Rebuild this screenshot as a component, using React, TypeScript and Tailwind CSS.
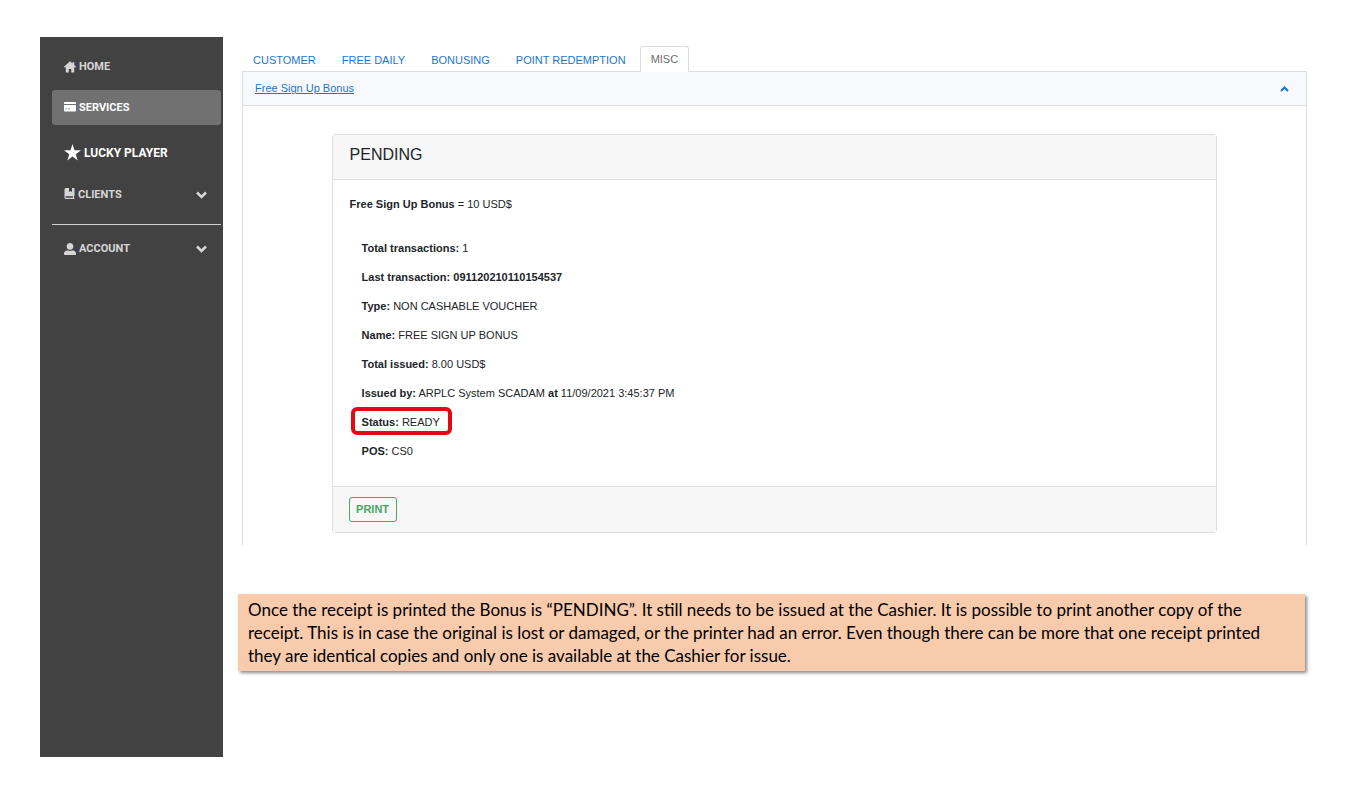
import React from "react";
import { FaUserAlt } from "react-icons/fa";

const HomeIcon = () => (
  <svg viewBox="0 0 22 22" className="w-3 h-3" fill="currentColor" aria-hidden="true">
    <path d="M11 0.5 L0 10.5 L1.8 12.3 L3.3 11 V21 H8.7 V14.5 H13.3 V21 H18.7 V11 L20.2 12.3 L22 10.5 L18.7 7.5 V2.5 H15.5 V4.6 Z" />
  </svg>
);

const CardIcon = () => (
  <svg viewBox="0 0 24 20" className="mb-[2px] w-3 h-[10px]" fill="currentColor" aria-hidden="true">
    <path d="M1.5 0 H22.5 Q24 0 24 1.5 V4 H0 V1.5 Q0 0 1.5 0 Z" />
    <path fillRule="evenodd" d="M0 6 H24 V17.5 Q24 19 22.5 19 H1.5 Q0 19 0 17.5 Z M3 13 V14.5 H6 V13 Z M8 13 V14.5 H12 V13 Z" />
  </svg>
);

const BookIcon = () => (
  <svg viewBox="0 0 20 22" className="mb-[2px] w-[11px] h-[11px]" fill="currentColor" aria-hidden="true">
    <path
      fillRule="evenodd"
      d="M3 0 H9 V8 L12 6 L15 8 V0 H18 Q20 0 20 2 V15 Q20 16 19 16 V20 H20 V22 H3 Q0 22 0 19 V3 Q0 0 3 0 Z M3.5 16.5 Q2 16.5 2 18 Q2 19.7 3.5 19.7 H17 V16.5 Z"
    />
  </svg>
);

const StarIcon = () => (
  <svg viewBox="0 0 34 34" className="w-[17px] h-[17px]" fill="currentColor" aria-hidden="true">
    <path d="M17 0 L21 12.5 H34 L23.5 20.3 L27.5 33 L17 25.2 L6.5 33 L10.5 20.3 L0 12.5 H13 Z" />
  </svg>
);

const ChevronDown = () => (
  <svg viewBox="0 0 22 16" className="mr-[2px] ml-auto h-2 w-[11px]" fill="none" stroke="currentColor" strokeWidth="5" aria-hidden="true">
    <path d="M2 3 L11 12 L20 3" />
  </svg>
);

const ChevronUp = () => (
  <svg viewBox="0 0 18 12" className="h-[6px] w-[9px]" fill="none" stroke="currentColor" strokeWidth="4" aria-hidden="true">
    <path d="M2 10 L9 3 L16 10" />
  </svg>
);

const navItem = "flex h-[35px] w-full items-center gap-[3px] rounded-[3px] px-3 text-left";

const tabs = ["CUSTOMER", "FREE DAILY", "BONUSING", "POINT REDEMPTION"];

const details = [
  { label: "Total transactions:", value: "1" },
  { label: "Last transaction:", value: <b>091120210110154537</b> },
  { label: "Type:", value: "NON CASHABLE VOUCHER" },
  { label: "Name:", value: "FREE SIGN UP BONUS" },
  { label: "Total issued:", value: "8.00 USD$" },
  {
    label: "Issued by:",
    value: (
      <>
        ARPLC System SCADAM <b>at</b> 11/09/2021 3:45:37 PM
      </>
    ),
  },
  { label: "Status:", value: "READY", highlight: true },
  { label: "POS:", value: "CS0" },
];

const Sidebar = () => (
  <nav className="w-[183px] shrink-0 bg-[#424242] pt-3 pr-[2px] pl-3 font-['Roboto',sans-serif] text-[11px] font-bold text-[#d6d6d6]">
    <a href="#" className={navItem}>
      <HomeIcon />
      <span className="pt-[2px]">HOME</span>
    </a>
    <a href="#" className={`${navItem} mt-[6px] bg-[#717171] text-white`}>
      <CardIcon />
      <span className="pt-[2px]">SERVICES</span>
    </a>
    <a href="#" className={`${navItem} mt-[10px] text-white`}>
      <StarIcon />
      <span className="text-xs">LUCKY PLAYER</span>
    </a>
    <button type="button" className={`${navItem} mt-[7px]`}>
      <BookIcon />
      <span className="pt-[2px]">CLIENTS</span>
      <ChevronDown />
    </button>
    <hr className="mt-3 border-[#d0d0d0]" />
    <button type="button" className={`${navItem} mt-[6px]`}>
      <FaUserAlt className="size-3" />
      <span className="pt-[2px]">ACCOUNT</span>
      <ChevronDown />
    </button>
  </nav>
);

const BonusCard = () => (
  <section className="mx-auto mt-7 w-10/12 rounded-[3px] border border-[#dfdfdf] text-[#212529]">
    <header className="border-b border-[#dfdfdf] bg-[#f7f7f7] px-[17px] pt-[6px] pb-[10px]">
      <h2 className="text-base leading-7">PENDING</h2>
    </header>
    <div className="px-[17px] pt-[10px] pb-5 leading-[29px]">
      <p>
        <b>Free Sign Up Bonus</b> = 10 USD$
      </p>
      <ul className="mt-[15px] pl-3">
        {details.map(({ label, value, highlight }) => (
          <li key={label} className="relative">
            <b>{label}</b> {value}
            {highlight && (
              <span className="absolute -top-px -left-[11px] h-[28px] w-[101px] rounded-md border-4 border-[#e20a10]" />
            )}
          </li>
        ))}
      </ul>
    </div>
    <footer className="border-t border-[#dfdfdf] bg-[#f7f7f7] px-4 py-[10px]">
      <button type="button" className="flex h-[25px] w-12 items-center justify-center rounded-[3px] border border-[#4ba664] font-bold text-[#4ba664]">
        PRINT
      </button>
    </footer>
  </section>
);

const App = () => {
  return (
    <div className="flex min-h-screen bg-white py-[37px] pl-10 font-['Liberation_Sans',Arial,sans-serif] text-[11px]">
      <Sidebar />
      <main className="min-w-0 flex-1 pt-[9px] pr-[54px] pl-[15px]">
        <div className="ml-1">
          <div role="tablist" className="flex h-[26px] gap-[2px] border-b border-[#dcdfe2]">
            {tabs.map((tab) => (
              <button key={tab} type="button" role="tab" aria-selected={false} className="px-3 pt-1 text-[#1b75d0] first:pl-[11px]">
                {tab}
              </button>
            ))}
            <button type="button" role="tab" aria-selected={true} className="-mb-px rounded-t-[3px] border border-b-0 border-[#dcdfe2] bg-white px-[10px] text-[#6d6d6d]">
              MISC
            </button>
          </div>
          <div className="border-x border-[#dcdfe2] pb-3">
            <div className="flex h-[34px] items-center justify-between border-b border-[#dcdfe2] bg-[#f7f9fc] pr-[17px] pl-3 text-[#1b75d0]">
              <a href="#" className="underline">
                Free Sign Up Bonus
              </a>
              <button type="button" aria-label="Collapse">
                <ChevronUp />
              </button>
            </div>
            <BonusCard />
          </div>
        </div>
        <p className="mt-[49px] mr-[2px] bg-[#f8cbad] px-[10px] py-1 font-['Lato',Calibri,sans-serif] text-[17px] leading-[23px] text-black shadow-[2px_2px_3px_rgba(0,0,0,0.45)]">
          Once the receipt is printed the Bonus is “PENDING”. It still needs to be issued at the Cashier. It is possible to print another copy of the
          <br />
          receipt. This is in case the original is lost or damaged, or the printer had an error. Even though there can be more that one receipt printed
          <br />
          they are identical copies and only one is available at the Cashier for issue.
        </p>
      </main>
    </div>
  );
};

export default App;
